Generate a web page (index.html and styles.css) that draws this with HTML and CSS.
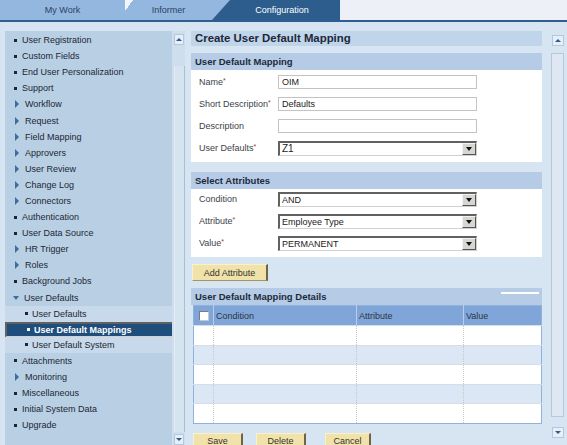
FILE: index.html
```html
<!DOCTYPE html>
<html>
<head>
<meta charset="utf-8">
<title>Create User Default Mapping</title>
<link rel="stylesheet" href="styles.css">
</head>
<body>
<div class="tabs">
  <div class="tab mywork">My Work</div>
  <div class="tab informer">Informer</div>
  <div class="tab config">Configuration</div>
  <div class="tab-fill"></div>
</div>
<div class="layout">
  <div class="side">
    <ul class="nav">
      <li class="item b"><span class="ico"></span>User Registration</li>
      <li class="item b"><span class="ico"></span>Custom Fields</li>
      <li class="item b"><span class="ico"></span>End User Personalization</li>
      <li class="item b"><span class="ico"></span>Support</li>
      <li class="item t"><span class="ico"></span>Workflow</li>
      <li class="item t"><span class="ico"></span>Request</li>
      <li class="item t"><span class="ico"></span>Field Mapping</li>
      <li class="item t"><span class="ico"></span>Approvers</li>
      <li class="item t"><span class="ico"></span>User Review</li>
      <li class="item t"><span class="ico"></span>Change Log</li>
      <li class="item t"><span class="ico"></span>Connectors</li>
      <li class="item b"><span class="ico"></span>Authentication</li>
      <li class="item b"><span class="ico"></span>User Data Source</li>
      <li class="item t"><span class="ico"></span>HR Trigger</li>
      <li class="item t"><span class="ico"></span>Roles</li>
      <li class="item b"><span class="ico"></span>Background Jobs</li>
      <li class="item d"><span class="ico"></span>User Defaults</li>
      <li class="item s"><span class="ico"></span>User Defaults</li>
      <li class="item s sel"><span class="ico"></span>User Default Mappings</li>
      <li class="item s"><span class="ico"></span>User Default System</li>
      <li class="item b"><span class="ico"></span>Attachments</li>
      <li class="item t"><span class="ico"></span>Monitoring</li>
      <li class="item b"><span class="ico"></span>Miscellaneous</li>
      <li class="item b"><span class="ico"></span>Initial System Data</li>
      <li class="item b"><span class="ico"></span>Upgrade</li>
    </ul>
    <div class="side-scroll">
      <div class="arrow up"></div>
      <div class="side-track"></div>
      <div class="arrow down"></div>
    </div>
  </div>

  <main class="content">
    <div class="title">Create User Default Mapping</div>

    <section class="sec sec1">
      <div class="sec-h">User Default Mapping</div>
      <div class="sec-b b1">
        <div class="row"><span class="lbl">Name<i>*</i></span><span class="inp">OIM</span></div>
        <div class="row"><span class="lbl">Short Description<i>*</i></span><span class="inp">Defaults</span></div>
        <div class="row"><span class="lbl">Description</span><span class="inp"></span></div>
        <div class="row"><span class="lbl">User Defaults<i>*</i></span><span class="sel big"><span class="val">Z1</span><span class="dd"></span></span></div>
      </div>
    </section>

    <section class="sec sec2">
      <div class="sec-h">Select Attributes</div>
      <div class="sec-b b2">
        <div class="row"><span class="lbl">Condition</span><span class="sel"><span class="val">AND</span><span class="dd"></span></span></div>
        <div class="row"><span class="lbl">Attribute<i>*</i></span><span class="sel"><span class="val">Employee Type</span><span class="dd"></span></span></div>
        <div class="row"><span class="lbl">Value<i>*</i></span><span class="sel"><span class="val">PERMANENT</span><span class="dd"></span></span></div>
      </div>
    </section>

    <div class="btn add">Add Attribute</div>

    <section class="sec sec3">
      <div class="sec-h h3"><span>User Default Mapping Details</span><span class="bar"></span></div>
      <table class="grid">
        <colgroup><col class="c0"><col class="c1"><col class="c2"><col class="c3"></colgroup>
        <thead>
          <tr><th><span class="chk"></span></th><th>Condition</th><th>Attribute</th><th>Value</th></tr>
        </thead>
        <tbody>
          <tr><td></td><td></td><td></td><td></td></tr>
          <tr class="alt"><td></td><td></td><td></td><td></td></tr>
          <tr><td></td><td></td><td></td><td></td></tr>
          <tr class="alt"><td></td><td></td><td></td><td></td></tr>
          <tr><td></td><td></td><td></td><td></td></tr>
        </tbody>
      </table>
    </section>

    <div class="actions">
      <div class="btn save">Save</div>
      <div class="btn del">Delete</div>
      <div class="btn cancel">Cancel</div>
    </div>
  </main>

  <div class="main-scroll">
    <div class="arrow up"></div>
    <div class="main-track"></div>
    <div class="arrow down"></div>
  </div>
</div>
</body>
</html>
```

FILE: styles.css
```css
* { box-sizing: border-box; margin: 0; padding: 0; }

body {
  width: 567px;
  height: 445px;
  overflow: hidden;
  background: #d7e4f1;
  font-family: "Liberation Sans", Arial, sans-serif;
  font-size: 9px;
  color: #2a2f36;
}

/* ---------- tabs ---------- */
.tabs {
  display: flex;
  height: 22px;
  background: #94b7df;
  border-bottom: 2px solid #2e5f8f;
}
.tab {
  display: flex;
  align-items: center;
  justify-content: center;
  height: 20px;
  color: #2b4262;
}
.mywork { width: 125px; }
.informer {
  width: 87px;
  background: linear-gradient(to bottom right, #f2f6fb 0 50%, transparent 50%) no-repeat 0 0 / 8px 11px;
}
.config {
  width: 128px;
  padding-left: 12px;
  background: #2c5d8c;
  color: #ffffff;
  clip-path: polygon(18px 0, 100% 0, 100% 100%, 0 100%);
}
.tab-fill {
  flex: 1;
  height: 20px;
  background: #edf1f7;
}

/* ---------- layout ---------- */
.layout {
  display: flex;
  padding-top: 9px;
  height: 423px;
}

/* ---------- sidebar ---------- */
.side {
  display: flex;
  flex: none;
  width: 180px;
  margin-left: 5px;
  height: 414px;
  overflow: hidden;
}
.nav {
  flex: none;
  width: 167px;
  background: #b8cfe4;
  list-style: none;
  padding-top: 1px;
  overflow: hidden;
}
.item {
  display: flex;
  align-items: center;
  width: 167px;
  height: 16.1px;
  color: #1d2734;
  white-space: nowrap;
  overflow: hidden;
}
.item .ico { flex: none; }
.item.b { padding-left: 9px; }
.item.b .ico {
  width: 3px; height: 3px;
  background: #1c2633;
  margin-right: 5px;
}
.item.t { padding-left: 10px; }
.item.t .ico {
  width: 0; height: 0;
  border-left: 4px solid #3a6da4;
  border-top: 4px solid transparent;
  border-bottom: 4px solid transparent;
  margin-right: 6px;
}
.item.d { padding-left: 8px; }
.item.d .ico {
  width: 0; height: 0;
  border-top: 4px solid #3a6da4;
  border-left: 3.5px solid transparent;
  border-right: 3.5px solid transparent;
  margin-right: 5px;
}
.item.s {
  padding-left: 20px;
  background: #c7d9ea;
}
.item.s .ico {
  width: 3px; height: 3px;
  background: #1c2633;
  margin-right: 4px;
}
.item.sel {
  background: #1f4d7c;
  color: #ffffff;
  font-weight: bold;
}
.item.sel .ico { background: #ffffff; }

.side-scroll {
  display: flex;
  flex: none;
  flex-direction: column;
  width: 13px;
  background: #cfdeec;
  padding-left: 2px;
}
.side-scroll .up { margin-top: 3px; }
.side-track {
  flex: 1;
  margin: 21px 0 2px;
  border-right: 1px solid #a9bfd6;
  border-left: 1px solid #e3ecf5;
  background: #d6e4f0;
}

.arrow {
  flex: none;
  display: flex;
  align-items: center;
  justify-content: center;
  width: 10px;
  height: 11px;
  background: #e6eef7;
  border: 1px solid #b5c7da;
}
.arrow::before {
  content: "";
  width: 0; height: 0;
  border-left: 3px solid transparent;
  border-right: 3px solid transparent;
}
.arrow.up::before { border-bottom: 3px solid #2c5c91; }
.arrow.down::before { border-top: 3px solid #2c5c91; }

/* ---------- main ---------- */
.content {
  flex: none;
  width: 351px;
  margin-left: 6px;
}
.title {
  height: 15px;
  line-height: 15px;
  padding-left: 4px;
  background: #c0d4ea;
  color: #1c2838;
  font-weight: bold;
  font-size: 11.4px;
  white-space: nowrap;
}
.sec { margin-top: 7px; }
.sec2 { margin-top: 10px; }
.sec-h {
  height: 17px;
  line-height: 17px;
  padding-left: 4px;
  background: #b5cbe6;
  color: #1d2a3a;
  font-weight: bold;
  font-size: 9.5px;
}
.sec-b {
  background: #ffffff;
  padding: 5px 0 0 8px;
}
.b1 { height: 92px; }
.b2 { height: 68px; padding-top: 3px; }

.row {
  display: flex;
  align-items: center;
  height: 14px;
  margin-bottom: 8px;
}
.lbl {
  width: 79px;
  color: #3d4249;
  white-space: nowrap;
}
.lbl i {
  font-style: normal;
  font-size: 7px;
  color: #9c3a22;
  vertical-align: 2px;
}
.inp {
  width: 199px;
  height: 14px;
  line-height: 12px;
  padding-left: 3px;
  background: #ffffff;
  border: 1px solid #c3c3c3;
  color: #222;
}
.sel {
  display: flex;
  width: 199px;
  height: 15px;
  background: #ffffff;
  border-top: 2px solid #616161;
  border-left: 2px solid #616161;
  border-right: 1px solid #d0d0d0;
  border-bottom: 1px solid #d0d0d0;
  color: #222;
}
.sel .val {
  flex: 1;
  line-height: 12px;
  padding-left: 2px;
}
.sel.big .val { font-size: 10px; }
.dd {
  display: flex;
  align-items: center;
  justify-content: center;
  width: 14px;
  background: #d6d6d2;
  border-top: 1px solid #f2f2f2;
  border-left: 1px solid #f2f2f2;
  border-right: 1px solid #555;
  border-bottom: 1px solid #555;
}
.dd::before {
  content: "";
  width: 0; height: 0;
  border-top: 4px solid #111;
  border-left: 3.5px solid transparent;
  border-right: 3.5px solid transparent;
}

/* ---------- buttons ---------- */
.btn {
  display: flex;
  align-items: center;
  justify-content: center;
  height: 17px;
  background: #f1e2a9;
  border-top: 1px solid #f9f0cf;
  border-left: 1px solid #f9f0cf;
  border-right: 2px solid #6f6546;
  border-bottom: 1px solid #a2946a;
  color: #333;
  white-space: nowrap;
}
.add {
  width: 76px;
  margin: 7px 0 0 1px;
}
.sec3 { margin-top: 7px; }
.h3 {
  display: flex;
  justify-content: space-between;
}
.h3 .bar {
  width: 38px;
  height: 2px;
  margin: 4px 3px 0 0;
  background: #ffffff;
}

/* ---------- grid ---------- */
.grid {
  width: 348px;
  margin-left: 2px;
  border-collapse: collapse;
  table-layout: fixed;
  border: 1px solid #8fb1dc;
}
.c0 { width: 20px; }
.c1 { width: 143px; }
.c2 { width: 107px; }
.c3 { width: 78px; }
.grid th {
  height: 20px;
  background: #80a6d9;
  color: #2b3442;
  font-weight: normal;
  text-align: left;
  padding-left: 2px;
  border-left: 1px solid #b9cde9;
}
.grid th:first-child { border-left: none; padding-left: 5px; }
.chk {
  display: block;
  width: 10px;
  height: 10px;
  background: #ffffff;
  border: 1px solid #7b7b7b;
  border-right-color: #c8c8c8;
  border-bottom-color: #c8c8c8;
}
.grid td {
  height: 19.6px;
  background: #ffffff;
  border-left: 1px dotted #c9c9c3;
  border-top: 1px solid #d3dee9;
}
.grid td:first-child { border-left: none; }
.grid tr.alt td { background: #dbe7f4; }

.actions {
  display: flex;
  margin: 9px 0 0 2px;
}
.save { width: 50px; }
.del { width: 50px; margin-left: 13px; }
.cancel { width: 46px; margin-left: 19px; }

/* ---------- right scrollbar ---------- */
.main-scroll {
  display: flex;
  flex: none;
  flex-direction: column;
  align-items: center;
  width: 13px;
  margin-left: 9px;
}
.main-scroll .up { margin-top: 4px; width: 12px; }
.main-scroll .down { margin-top: 10px; width: 12px; }
.main-track {
  width: 13px;
  height: 364px;
  margin-top: 7px;
  background: #dfe8f2;
  border: 1px solid #b6c8da;
}
```
